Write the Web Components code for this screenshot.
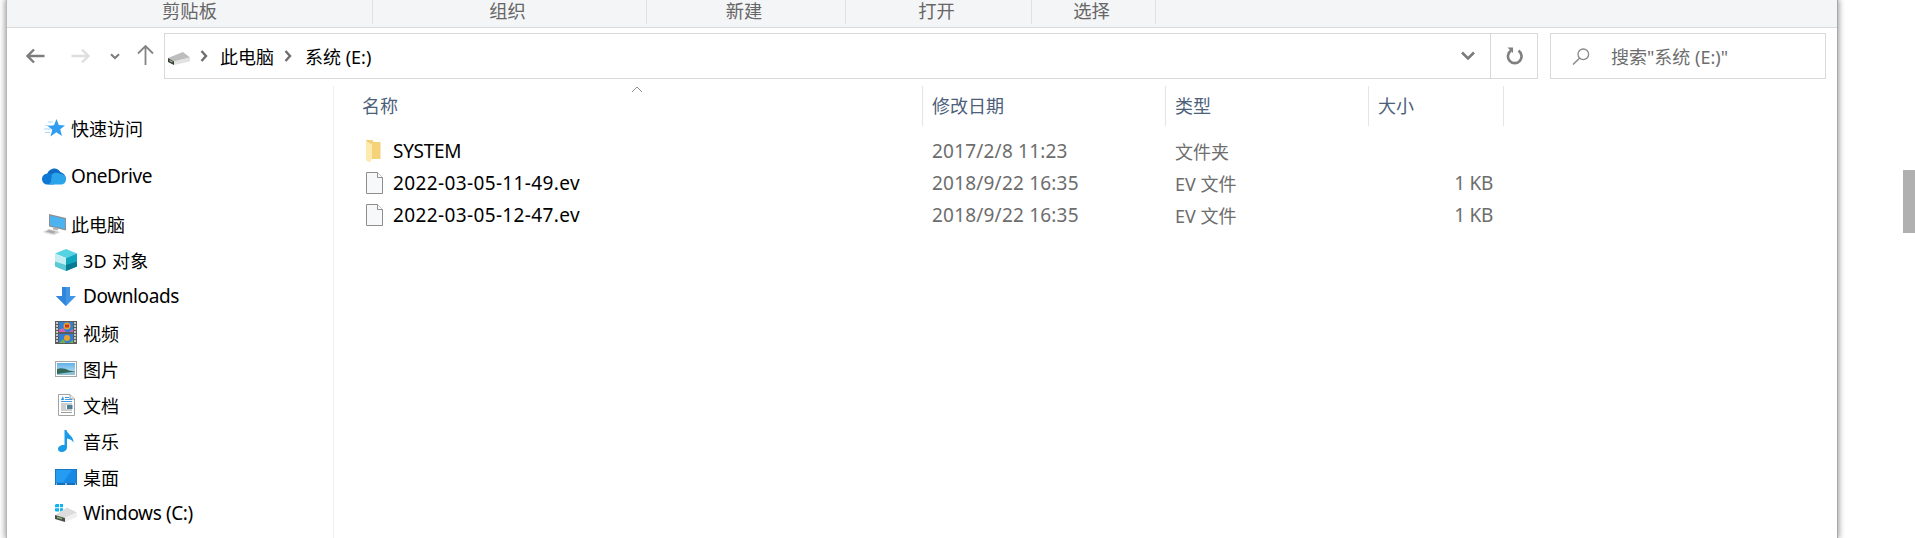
<!DOCTYPE html>
<html>
<head>
<meta charset="utf-8">
<style>
    html, body { margin: 0; height: 538px; overflow: hidden; background: #fff; }
    body { font: 18px "Noto Sans", "Noto Sans CJK SC", sans-serif; }
</style>
</head>
<body>
<file-explorer>
    <ribbon-bar slot="ribbon">
        <ribbon-group style="--w:366px">剪贴板</ribbon-group>
        <ribbon-group style="--w:274px;--p:4px">组织</ribbon-group>
        <ribbon-group style="--w:199px;--p:4px">新建</ribbon-group>
        <ribbon-group style="--w:186px;--p:4px">打开</ribbon-group>
        <ribbon-group style="--w:124px;--p:4px">选择</ribbon-group>
    </ribbon-bar>
    <nav-bar slot="nav"></nav-bar>
    <side-tree slot="side">
        <tree-item icon="star">快速访问</tree-item>
        <tree-item icon="onedrive" gap latin>OneDrive</tree-item>
        <tree-item icon="pc" gap>此电脑</tree-item>
        <tree-item icon="cube" sub style="letter-spacing:.3px">3D 对象</tree-item>
        <tree-item icon="download" sub latin>Downloads</tree-item>
        <tree-item icon="video" sub>视频</tree-item>
        <tree-item icon="picture" sub>图片</tree-item>
        <tree-item icon="doc" sub>文档</tree-item>
        <tree-item icon="music" sub>音乐</tree-item>
        <tree-item icon="desktop" sub>桌面</tree-item>
        <tree-item icon="windrive" sub latin>Windows (C:)</tree-item>
    </side-tree>
    <file-list slot="main">
        <file-row icon="folder" name="SYSTEM" date="2017/2/8 11:23" kind="文件夹" size="" style="--ls:-.3px"></file-row>
        <file-row icon="file" name="2022-03-05-11-49.ev" date="2018/9/22 16:35" kind="EV 文件" size="1 KB"></file-row>
        <file-row icon="file" name="2022-03-05-12-47.ev" date="2018/9/22 16:35" kind="EV 文件" size="1 KB"></file-row>
    </file-list>
</file-explorer>

<script>
const ICONS = {
    back: `<svg width="20" height="16" viewBox="0 0 20 16"><path d="M9 1.500 2.500 8 9 14.500M3 8H19.500" fill="none" stroke="#7c7c7c" stroke-width="2.400"/></svg>`,
    forward: `<svg width="20" height="16" viewBox="0 0 20 16"><path d="M11 1.500 17.500 8 11 14.500M17 8H.5" fill="none" stroke="#dedede" stroke-width="2.400"/></svg>`,
    down: `<svg width="10" height="7" viewBox="0 0 10 7"><path d="M1 1.200 5 5 9 1.200" fill="none" stroke="#7c7c7c" stroke-width="2"/></svg>`,
    up: `<svg width="17" height="20" viewBox="0 0 17 20"><path d="M1 8.500 8.500 1 16 8.500M8.500 1.500V20" fill="none" stroke="#848484" stroke-width="1.800"/></svg>`,
    crumb: `<svg width="8" height="12" viewBox="0 0 8 12"><path d="M1.500 1 6 6 1.500 11" fill="none" stroke="#6e6e6e" stroke-width="2.400"/></svg>`,
    drop: `<svg width="14" height="10" viewBox="0 0 14 10"><path d="M1 1.500 7 7.500 13 1.500" fill="none" stroke="#7c7c7c" stroke-width="2.600"/></svg>`,
    refresh: `<svg width="17" height="18" viewBox="0 0 17 18"><path d="M5 3.700A6.800 6.800 0 1 0 12.500 3.700" fill="none" stroke="#7f7f7f" stroke-width="2.600"/><path d="M1.500 .5H7V6Z" fill="#7f7f7f"/></svg>`,
    search: `<svg width="18" height="17" viewBox="0 0 18 17"><circle cx="11.300" cy="6.300" r="5.300" fill="none" stroke="#8a8a8a" stroke-width="1.300"/><path d="M7.500 10.200 1 16.500" stroke="#8a8a8a" stroke-width="1.500"/></svg>`,
    caret: `<svg width="12" height="7" viewBox="0 0 12 7"><path d="M1 6 6 1 11 6" fill="none" stroke="#8f8f8f" stroke-width="1"/></svg>`,
    drive: `<svg width="22" height="13" viewBox="0 0 22 13"><path d="M0 6 15 0 22 5.500 6 9.500Z" fill="#bdbdbd"/><path d="M0 6 6 9.500V13L0 10Z" fill="#3a3a3a"/><path d="M6 9.500 22 5.500V9.500L6 13Z" fill="#e2e2e2"/><path d="M1.500 7.800 4.500 9.500V10.800L1.500 9.200Z" fill="#8fc97a"/></svg>`,
    star: `<svg width="22" height="18" viewBox="0 0 22 18"><path d="M13.500 0 15.800 6 22 6.400 17.200 10.300 19 17 13.300 13.300 7.500 17.500 9.300 10.700 4.800 7 11 6.200Z" fill="#2e9df2"/><path d="M5 3H9.500M2.500 6.500H7M1 10H8M2 13.500H7" stroke="#a9d6f7" stroke-width="1.200"/></svg>`,
    onedrive: `<svg width="24" height="17" viewBox="0 0 24 17"><path d="M5 6.500C6 3 9 .5 12.500.5 15 .5 17 1.700 18.300 4 21.500 5 23.800 7.500 24 11L15 15 5 8Z" fill="#0f6cc4"/><path d="M5.500 5.500C2.500 5.800 0 8 0 11S2.500 16.500 5 16.500H12L17 8 10.500 6.500C9 5.700 7 5.300 5.500 5.500Z" fill="#0e78d5"/><path d="M10 6.200C12 4.800 15 4 18 5.800 21.500 5.800 24 8 24 11.500 24 14.500 21.500 16.500 19 16.500H5C8 16.500 9.500 14 9 12Z" fill="#2ca4ea"/></svg>`,
    pc: `<svg width="23" height="21" viewBox="0 0 23 21"><path d="M6 0 23 4V16.500L6 12.500Z" fill="#8f8f8f"/><path d="M7 1.500 22 5V15L7 11.500Z" fill="#4db2f0"/><path d="M10 13 15 14.200V16.500L10 15.500Z" fill="#b5b5b5"/><path d="M0 18 6 15 17 18 11 21Z" fill="#cfcfcf"/><path d="M3 17.500 6.500 16 13 17.800 9.500 19.500Z" fill="#a9a9a9"/><path d="M.5 18.500 10.500 21" stroke="#ececec"/></svg>`,
    cube: `<svg width="22" height="22" viewBox="0 0 22 22"><path d="M11 0 22 4.500 11 9 0 4.500Z" fill="#55d3e2"/><path d="M0 4.500 11 9V22L0 17.500Z" fill="#c3eff2"/><path d="M22 4.500 11 9V22L22 17.500Z" fill="#11a6bd"/><path d="M0 12.500 11 16V22L0 17.500Z" fill="#5cc9d6"/><path d="M22 12.500 11 16V22L22 17.500Z" fill="#0a7a94"/></svg>`,
    download: `<svg width="20" height="19" viewBox="0 0 20 19"><path d="M6 0H14V9H20L10 19 0 9H6Z" fill="#3f95e6"/><path d="M6 0H10V19L0 9H6Z" fill="#2f86dc"/></svg>`,
    video: `<svg width="22" height="23" viewBox="0 0 22 23"><rect width="22" height="23" fill="#5c5c5c"/><path d="M1 2H3M1 5H3M1 8H3M1 11H3M1 14H3M1 17H3M1 20H3M19 2H21M19 5H21M19 8H21M19 11H21M19 14H21M19 17H21M19 20H21" stroke="#e8e8e8" stroke-width="1.400"/><rect x="4" y="1" width="14" height="10" fill="#2f7fd8"/><rect x="4" y="13" width="14" height="9" fill="#2f7fd8"/><circle cx="12" cy="5" r="3.500" fill="#e9a32a"/><path d="M10 3.500H14V6.500H10Z" fill="#c9332b"/><path d="M4 9 8 7 11 11H4ZM14 11 18 8V11Z" fill="#d563b0"/><circle cx="12" cy="17" r="3" fill="#e9a32a"/><path d="M4 22 8 18 11 22ZM14 22 18 19V22Z" fill="#6fb24b"/></svg>`,
    picture: `<svg width="22" height="16" viewBox="0 0 22 16"><defs><linearGradient id="sky" x1="0" y1="0" x2="0" y2="1"><stop offset="0" stop-color="#5fb2e8"/><stop offset="1" stop-color="#cfe6f3"/></linearGradient></defs><rect x=".5" y=".5" width="21" height="15" fill="#fff" stroke="#a8a8a8"/><rect x="2" y="2" width="18" height="12" fill="url(#sky)"/><path d="M2 8C6 6.500 10 7.500 14 9.500L20 10.500V14H2Z" fill="#2f6a5a"/><path d="M9 12 20 10.500V14H2V13Z" fill="#8dc2d6"/></svg>`,
    doc: `<svg width="17" height="22" viewBox="0 0 17 22"><path d="M.5.5H12L16.500 5V21.500H.5Z" fill="#fff" stroke="#a3a3a3"/><path d="M12 .5V5H16.500" fill="#e9e9e9" stroke="#a3a3a3"/><path d="M3 6 5 2 6 6Z" fill="#2f8fe6"/><path d="M7 3.500H11M7 5.500H14M3 7.500H14" stroke="#3f9be6"/><path d="M3 10H14M3 12H8M3 14H8M3 16H14M3 18.500H14" stroke="#9d9d9d"/><rect x="9" y="11" width="5.500" height="4" fill="#4d7f98"/></svg>`,
    music: `<svg width="16" height="22" viewBox="0 0 16 22"><path d="M6.500 0H8.500C9 4 16 6 15.500 13 14.500 10 11 8.800 9 8.500V17.500C9 20 6.500 22 3.500 22 1.500 22 0 21 0 19 0 16.500 3 14.500 6.500 15Z" fill="#1a9be8"/></svg>`,
    desktop: `<svg width="22" height="16" viewBox="0 0 22 16"><rect width="22" height="16" fill="#1570b8"/><rect x=".8" y=".8" width="20.400" height="13" fill="#259cf2"/><path d="M8 14 17 .8H21.200V14Z" fill="#1788e3"/><path d="M1 15H2M10 15H12M20 15H21" stroke="#fff"/></svg>`,
    windrive: `<svg width="22" height="18" viewBox="0 0 22 18"><path d="M1 0H4V3.300H0V1ZM5 0 8 .0V3.300H5ZM0 4.300H4V7.500H1L0 7ZM5 4.300H8V7.500H5Z" fill="#10b4ee"/><path d="M0 11 12 3.500 22 8.500 10 14Z" fill="#dcdcdc"/><path d="M0 11 10 14V18L0 15Z" fill="#4c4c4c"/><path d="M10 14 22 8.500V13L10 18Z" fill="#efefef"/><path d="M2 12.500 7 14V15.500L2 14Z" fill="#78c06a"/></svg>`,
    folder: `<svg width="15" height="22" viewBox="0 0 15 22"><path d="M0 0H6.500L7.500 2H14.500V19H4V22L0 20Z" fill="#f4d27a"/><path d="M0 0 6 3.500V19L4 22 0 19.500Z" fill="#fdeaae"/><path d="M.4 .4 5.500 3.600" stroke="#e6c062" stroke-width=".8"/></svg>`,
    file: `<svg width="17" height="22" viewBox="0 0 17 22"><path d="M.5.5H11.500L16.500 5.500V21.500H.5Z" fill="#f7f8fa" stroke="#8e8e8e"/><path d="M11.500.5V5.500H16.500" fill="#fff" stroke="#8e8e8e"/></svg>`
};

const explorerTemplate = document.createElement('template');
explorerTemplate.innerHTML = `
    <style>
        :host { display: flex; width: 1915px; height: 538px; overflow: hidden; }
        .window {
            width: 1832px;
            margin-left: 6px;
            height: 538px;
            display: flex;
            flex-direction: column;
            box-shadow: 0 0 6px 1px rgba(0, 0, 0, .4);
            border-right: 1px solid #a8a8a8;
            border-left: 1px solid #b8b8b8;
            background: #fff;
        }
        .body { flex: 1; display: flex; min-height: 0; }
        .track { flex: 1; padding: 170px 0 0 65px; }
        .thumb { width: 12px; height: 63px; margin-left: auto; background: #b0b0b0; }
    </style>
    <div class="window">
        <slot name="ribbon"></slot>
        <slot name="nav"></slot>
        <div class="body">
            <slot name="side"></slot>
            <slot name="main"></slot>
        </div>
    </div>
    <div class="track"><div class="thumb"></div></div>
`;
class FileExplorer extends HTMLElement {
    constructor() {
        super();
        this.attachShadow({mode: "open"});
        this.shadowRoot.appendChild(explorerTemplate.content.cloneNode(true));
    }
}
customElements.define('file-explorer', FileExplorer);

const ribbonTemplate = document.createElement('template');
ribbonTemplate.innerHTML = `
    <style>
        :host {
            display: flex;
            height: 27px;
            background: #f4f5f7;
            border-bottom: 1px solid #dadbdc;
        }
    </style>
    <slot></slot>
`;
class RibbonBar extends HTMLElement {
    constructor() {
        super();
        this.attachShadow({mode: "open"});
        this.shadowRoot.appendChild(ribbonTemplate.content.cloneNode(true));
    }
}
customElements.define('ribbon-bar', RibbonBar);

const groupTemplate = document.createElement('template');
groupTemplate.innerHTML = `
    <style>
        :host {
            display: flex;
            justify-content: center;
            box-sizing: border-box;
            width: var(--w);
            height: 24px;
            padding-right: var(--p, 0);
            font: 18.300px/24px "Liberation Sans", "Noto Sans CJK SC", sans-serif;
            color: #666;
            border-right: 1px solid #dfe0e1;
        }
    </style>
    <slot></slot>
`;
class RibbonGroup extends HTMLElement {
    constructor() {
        super();
        this.attachShadow({mode: "open"});
        this.shadowRoot.appendChild(groupTemplate.content.cloneNode(true));
    }
}
customElements.define('ribbon-group', RibbonGroup);

const navTemplate = document.createElement('template');
navTemplate.innerHTML = `
    <style>
        :host { display: flex; align-items: center; height: 46px; padding: 5px 0 7px 0; }
        svg { display: block; flex: none; }
        .buttons { display: flex; align-items: center; width: 157px; flex: none; padding-left: 18px; box-sizing: border-box; }
        .buttons svg:nth-child(2) { margin-left: 26px; }
        .buttons svg:nth-child(3) { margin-left: 19px; }
        .buttons svg:nth-child(4) { margin-left: 17px; margin-top: -2px; }
        .box {
            box-sizing: border-box;
            height: 46px;
            display: flex;
            align-items: center;
            border: 1px solid #d9d9d9;
            color: #000;
        }
        .address { width: 1374px; flex: none; }
        .drive { margin: 5px 0 0 3px; }
        .crumb { margin-left: 10px; }
        .label { margin-left: 12px; }
        .crumb + .label + .crumb + .label { margin-left: 13px; }
        .spacer { flex: 1; }
        .dropdown { margin-right: 15px; }
        .refresh { width: 46px; height: 100%; flex: none; display: flex; align-items: center; justify-content: center; border-left: 1px solid #d9d9d9; }
        .search { width: 276px; margin-left: 12px; flex: none; color: #6d6d6d; }
        .search svg { margin-left: 21px; }
        .search span { margin-left: 21px; }
    </style>
    <div class="buttons">${ICONS.back}${ICONS.forward}${ICONS.down}${ICONS.up}</div>
    <div class="box address">
        <span class="drive">${ICONS.drive}</span>
        <span class="crumb">${ICONS.crumb}</span>
        <span class="label">此电脑</span>
        <span class="crumb">${ICONS.crumb}</span>
        <span class="label">系统 (E:)</span>
        <span class="spacer"></span>
        <span class="dropdown">${ICONS.drop}</span>
        <span class="refresh">${ICONS.refresh}</span>
    </div>
    <div class="box search">${ICONS.search}<span>搜索"系统 (E:)"</span></div>
`;
class NavBar extends HTMLElement {
    constructor() {
        super();
        this.attachShadow({mode: "open"});
        this.shadowRoot.appendChild(navTemplate.content.cloneNode(true));
    }
}
customElements.define('nav-bar', NavBar);

const treeTemplate = document.createElement('template');
treeTemplate.innerHTML = `
    <style>
        :host {
            display: flex;
            flex-direction: column;
            box-sizing: border-box;
            width: 327px;
            height: 100%;
            padding-top: 24px;
            border-right: 1px solid #f0f0f0;
        }
    </style>
    <slot></slot>
`;
class SideTree extends HTMLElement {
    constructor() {
        super();
        this.attachShadow({mode: "open"});
        this.shadowRoot.appendChild(treeTemplate.content.cloneNode(true));
    }
}
customElements.define('side-tree', SideTree);

const itemTemplate = document.createElement('template');
itemTemplate.innerHTML = `
    <style>
        :host {
            display: flex;
            align-items: center;
            flex: none;
            height: 36.100px;
            color: #000;
            padding-left: 35px;
        }
        :host([gap]) { margin-top: 12px; }
        :host([sub]) { padding-left: 47px; }
        :host([latin]) { font-size: 19px; letter-spacing: -.4px; }
        .icon { width: 24px; margin-right: 5px; flex: none; display: flex; justify-content: center; }
        svg { display: block; }
    </style>
    <span class="icon"></span><slot></slot>
`;
class TreeItem extends HTMLElement {
    constructor() {
        super();
        this.attachShadow({mode: "open"});
        this.shadowRoot.appendChild(itemTemplate.content.cloneNode(true));
        this.shadowRoot.querySelector('.icon').innerHTML = ICONS[this.getAttribute('icon')];
    }
}
customElements.define('tree-item', TreeItem);

const listTemplate = document.createElement('template');
listTemplate.innerHTML = `
    <style>
        :host { display: block; flex: 1; min-width: 0; position: relative; }
        .head {
            display: grid;
            grid-template-columns: 589px 243px 203px 135px;
            height: 40px;
            line-height: 40px;
            color: #4c607a;
        }
        .head div { box-sizing: border-box; padding-left: 9px; border-right: 1px solid #e5e5e5; }
        .head div:first-child { padding-left: 28px; }
        .caret { position: absolute; left: 297px; top: 0; }
        .caret svg { display: block; }
        .rows { padding-top: 9px; }
    </style>
    <div class="head"><div>名称</div><div>修改日期</div><div>类型</div><div>大小</div></div>
    <span class="caret">${ICONS.caret}</span>
    <div class="rows"><slot></slot></div>
`;
class FileList extends HTMLElement {
    constructor() {
        super();
        this.attachShadow({mode: "open"});
        this.shadowRoot.appendChild(listTemplate.content.cloneNode(true));
    }
}
customElements.define('file-list', FileList);

const rowTemplate = document.createElement('template');
rowTemplate.innerHTML = `
    <style>
        :host {
            display: grid;
            grid-template-columns: 589px 243px 203px 124px;
            align-items: center;
            height: 32px;
            color: #6d6d6d;
        }
        .name { display: flex; align-items: center; color: #000; padding-left: 32px; }
        .icon { width: 27px; flex: none; }
        svg { display: block; }
        .date { padding-left: 9px; font-size: 19px; letter-spacing: .2px; }
        .kind { padding-left: 9px; }
        .size { text-align: right; font-size: 19px; letter-spacing: -.3px; }
        .text { font-size: 19px; letter-spacing: var(--ls, .37px); }
    </style>
    <div class="name"><span class="icon"></span><span class="text"></span></div>
    <div class="date"></div>
    <div class="kind"></div>
    <div class="size"></div>
`;
class FileRow extends HTMLElement {
    constructor() {
        super();
        this.attachShadow({mode: "open"});
        this.shadowRoot.appendChild(rowTemplate.content.cloneNode(true));
        this.shadowRoot.querySelector('.icon').innerHTML = ICONS[this.getAttribute('icon')];
        this.shadowRoot.querySelector('.text').innerText = this.getAttribute('name');
        this.shadowRoot.querySelector('.date').innerText = this.getAttribute('date');
        this.shadowRoot.querySelector('.kind').innerText = this.getAttribute('kind');
        this.shadowRoot.querySelector('.size').innerText = this.getAttribute('size');
    }
}
customElements.define('file-row', FileRow);
</script>
</body>
</html>
